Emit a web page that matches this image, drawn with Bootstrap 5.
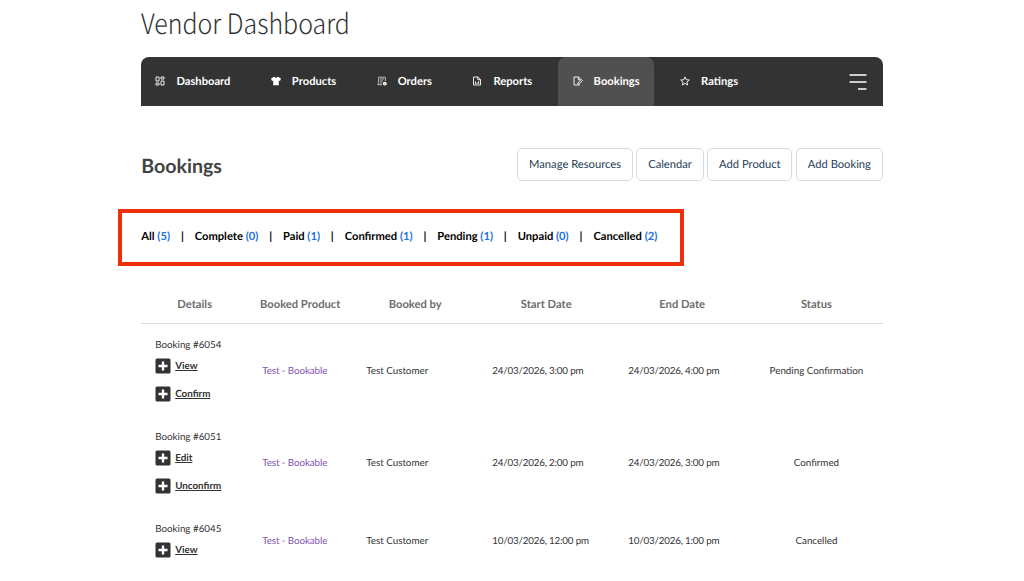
<!DOCTYPE html>
<html lang="en">
<head>
    <meta charset="UTF-8">
    <meta name="viewport" content="width=device-width, initial-scale=1.0">
    <title>Vendor Dashboard</title>
    <link href="https://cdn.jsdelivr.net/npm/bootstrap@5.3.0/dist/css/bootstrap.min.css" rel="stylesheet">
    <style>
        body {
            font-family: Lato, "Liberation Sans", sans-serif;
            font-size: 9.8px;
            color: #333;
            background: #fff;
            overflow: hidden;
            text-rendering: geometricPrecision;
        }
        .page {
            width: 741.5px;
            margin-left: 141.2px;
        }
        .page-title {
            font-family: "Noto Sans CJK JP", "Noto Sans", sans-serif;
            font-weight: 300;
            font-size: 28px;
            line-height: 40px;
            height: 57px;
            padding-top: 3px;
            color: #333;
            transform: scaleX(.89);
            transform-origin: left;
        }
        .vendor-nav {
            height: 49px;
            padding-right: 16px;
            background: #333;
            border-radius: 8px 8px 0 0;
        }
        .vendor-nav .nav {
            column-gap: 12px;
        }
        .vendor-nav .nav-link {
            gap: 11px;
            padding: 2px 14.2px 0;
            color: #fff;
            font-size: 11.2px;
            font-weight: 700;
        }
        .vendor-nav .nav-link.active {
            background: #505050;
            border-radius: 8px 8px 0 0;
        }
        .vendor-nav .nav-link svg {
            width: 10px;
            height: 10px;
            margin-top: -3px;
        }
        .vendor-nav .menu-icon {
            width: 18px;
            height: 18px;
        }
        .page-head {
            height: 33px;
            margin-top: 42px;
        }
        .page-head h2 {
            font-size: 19.6px;
            font-weight: 700;
            padding-top: 5px;
            color: #434343;
        }
        .btn-group-actions {
            gap: 3.6px;
        }
        .btn-action {
            height: 33px;
            padding: 0 10.8px;
            font-size: 11.2px;
            line-height: 32px;
            color: #1d3c56;
            border: 1px solid #d3dce6;
            border-radius: 5px;
        }
        .filters {
            width: 565.5px;
            height: 57px;
            margin: 28px 0 0 -23.2px;
            padding: 0 0 1px 19.3px;
            border: 4px solid #ee2f0b;
            font-size: 11.2px;
            font-weight: 700;
        }
        .filters a {
            color: #000;
            text-decoration: none;
        }
        .filters a span {
            color: #2271e0;
        }
        .filters li + li::before {
            content: "|";
            margin: 0 10.9px;
            color: #000;
        }
        .bookings {
            width: 741.5px;
            margin-top: 20px;
            table-layout: fixed;
        }
        .bookings th {
            height: 37px;
            padding-top: 4px;
            font-size: 11.2px;
            text-align: center;
            color: #6d6d6d;
            border-bottom: 1px solid #ddd;
        }
        .bookings td {
            padding: 11px 14px 9px;
            vertical-align: middle;
            line-height: 16px;
        }
        .bookings td:first-child {
            padding: 12px 14px 8px;
        }
        .booking-id {
            height: 16px;
            line-height: 18px;
        }
        .booking-date {
            letter-spacing: -.18px;
            white-space: nowrap;
        }
        .product-link {
            color: #7f54b3;
            letter-spacing: -.08px;
            text-decoration: none;
        }
        .row-action {
            display: flex;
            align-items: center;
            height: 28px;
            gap: 4px;
        }
        .row-action svg {
            width: 16px;
            height: 16px;
        }
        .row-action a {
            color: #333;
            font-weight: 700;
        }
    </style>
</head>
<body>
    <div class="page">
        <h1 class="page-title mb-0">Vendor Dashboard</h1>

        <nav class="vendor-nav d-flex align-items-center justify-content-between">
            <ul class="nav h-100">
                <li class="nav-item"><a class="nav-link h-100 d-flex align-items-center" href="#">
                    <svg viewBox="0 0 10 10" fill="none" stroke="#fff" stroke-width=".9"><path d="M1 1h3v4H1zM6 1h3v2H6zM6 5h3v4H6zM1 7h3v2H1z"/></svg>Dashboard</a></li>
                <li class="nav-item"><a class="nav-link h-100 d-flex align-items-center" href="#">
                    <svg viewBox="0 0 10 10" fill="#fff"><path d="M3.200.8Q5 2.600 6.800.8L10 2.400 9 5 7.800 4.600V9.300H2.200V4.600L1 5 0 2.400z"/></svg>Products</a></li>
                <li class="nav-item"><a class="nav-link h-100 d-flex align-items-center" href="#">
                    <svg viewBox="0 0 10 10" fill="none" stroke="#ddd" stroke-width=".8"><path d="M8.400 5V1.200H1.600v5.600L.8 8.700h4.400M3 3h4M3 5h3M3 7h2"/><circle cx="7.8" cy="7.6" r="1.9" fill="#fff" stroke="none"/><path d="M7.800 6.800v1.600" stroke="#555" stroke-width=".5"/></svg>Orders</a></li>
                <li class="nav-item"><a class="nav-link h-100 d-flex align-items-center" href="#">
                    <svg viewBox="0 0 10 10" fill="none" stroke="#fff"><path d="M1.500 1h4.600l2.400 2.400V9h-7zM5.800 1v2.700h2.700M3.500 8V5.500M5 8V6.500M6.600 8V5.200" stroke-width=".9"/></svg>Reports</a></li>
                <li class="nav-item"><a class="nav-link active h-100 d-flex align-items-center" href="#">
                    <svg viewBox="0 0 10 10" fill="none" stroke="#fff" stroke-width=".9"><path d="M7 9H1V1h4.600l2.200 2.200M5.400 1v2.700h1.800M4.800 8l.3-1.500 3.300-3.100 1.100 1.200L6.200 7.800z"/></svg>Bookings</a></li>
                <li class="nav-item"><a class="nav-link h-100 d-flex align-items-center" href="#">
                    <svg viewBox="0 0 10 10" fill="none" stroke="#fff" stroke-width=".9"><path d="M5 .9l1.200 2.800 3.100.3-2.400 2 .8 3L5 7.400 2.300 9l.8-3L.7 4l3.100-.3z"/></svg>Ratings</a></li>
            </ul>
            <svg class="menu-icon" viewBox="0 0 18 18" stroke="#fff" stroke-width="1.4"><path d="M.5 2h17M.5 9h17M9 16h8.500"/></svg>
        </nav>

        <div class="page-head d-flex align-items-center justify-content-between">
            <h2 class="mb-0">Bookings</h2>
            <div class="btn-group-actions d-flex">
                <a class="btn btn-action" href="#">Manage Resources</a>
                <a class="btn btn-action" href="#">Calendar</a>
                <a class="btn btn-action" href="#">Add Product</a>
                <a class="btn btn-action" href="#">Add Booking</a>
            </div>
        </div>

        <ul class="filters list-unstyled d-flex align-items-center">
            <li><a href="#">All <span>(5)</span></a></li>
            <li><a href="#">Complete <span>(0)</span></a></li>
            <li><a href="#">Paid <span>(1)</span></a></li>
            <li><a href="#">Confirmed <span>(1)</span></a></li>
            <li><a href="#">Pending <span>(1)</span></a></li>
            <li><a href="#">Unpaid <span>(0)</span></a></li>
            <li><a href="#">Cancelled <span>(2)</span></a></li>
        </ul>

        <table class="bookings">
            <colgroup>
                <col style="width: 107px"><col style="width: 104px"><col style="width: 126px">
                <col style="width: 136px"><col style="width: 136px"><col style="width: 132.5px">
            </colgroup>
            <thead>
                <tr>
                    <th>Details</th>
                    <th>Booked Product</th>
                    <th>Booked by</th>
                    <th>Start Date</th>
                    <th>End Date</th>
                    <th>Status</th>
                </tr>
            </thead>
            <tbody id="booking-rows"></tbody>
        </table>
    </div>

    <script src="https://cdn.jsdelivr.net/npm/bootstrap@5.3.0/dist/js/bootstrap.bundle.min.js"></script>
    <script>
        const bookings = [
            { id: 6054, actions: ["View", "Confirm"], start: "24/03/2026, 3:00 pm", end: "24/03/2026, 4:00 pm", status: "Pending Confirmation" },
            { id: 6051, actions: ["Edit", "Unconfirm"], start: "24/03/2026, 2:00 pm", end: "24/03/2026, 3:00 pm", status: "Confirmed" },
            { id: 6045, actions: ["View"], start: "10/03/2026, 12:00 pm", end: "10/03/2026, 1:00 pm", status: "Cancelled" }
        ];

        const plusIcon = '<svg viewBox="0 0 16 16"><rect x=".5" y=".5" width="15" height="15" rx="1.5" fill="#333"/><path d="M8 3.500v9M3.500 8h9" stroke="#fff" stroke-width="2.4"/></svg>';

        document.getElementById("booking-rows").innerHTML = bookings.map(b => `
            <tr>
                <td>
                    <div class="booking-id">Booking #${b.id}</div>
                    ${b.actions.map(a => `<div class="row-action">${plusIcon}<a href="#">${a}</a></div>`).join("")}
                </td>
                <td><a class="product-link" href="#">Test - Bookable</a></td>
                <td>Test Customer</td>
                <td class="booking-date">${b.start}</td>
                <td class="booking-date">${b.end}</td>
                <td class="text-center text-nowrap">${b.status}</td>
            </tr>`).join("");
    </script>
</body>
</html>
